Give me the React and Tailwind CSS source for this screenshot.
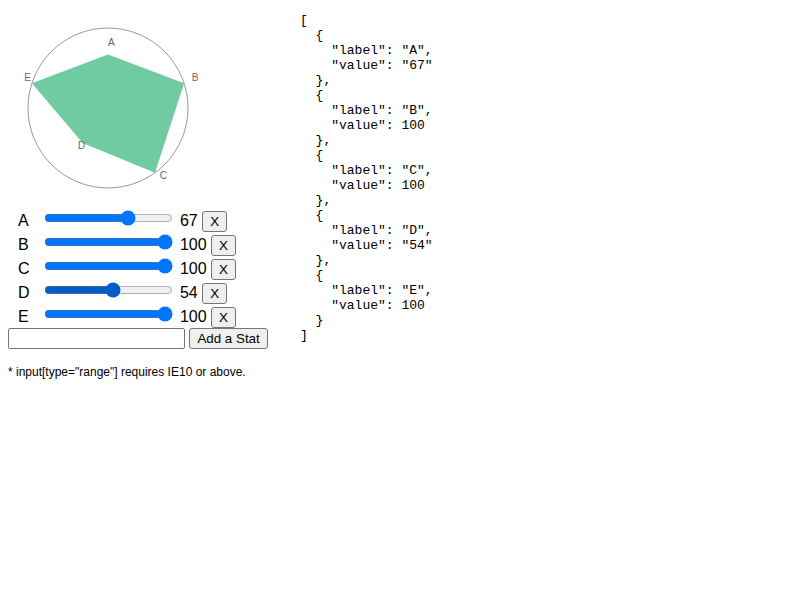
import React, { useState } from 'react';

const valueToPoint = (value, index, total) => {
  const y = -value * 0.8;
  const angle = (Math.PI * 2 / total) * index;
  return {
    x: -y * Math.sin(angle) + 100,
    y: y * Math.cos(angle) + 100,
  };
};

const btn =
  'bg-[#efefef] border border-[#767676] rounded-[3px] px-[7px] py-[2px] text-[13.33px] leading-[normal] text-black';

const App = () => {
  const [stats, setStats] = useState([
    { label: 'A', value: '67' },
    { label: 'B', value: 100 },
    { label: 'C', value: 100 },
    { label: 'D', value: '54' },
    { label: 'E', value: 100 },
  ]);
  const [newLabel, setNewLabel] = useState('');

  const total = stats.length;
  const points = stats
    .map((s, i) => {
      const p = valueToPoint(+s.value, i, total);
      return p.x + ',' + p.y;
    })
    .join(' ');

  const update = (i, v) => setStats(stats.map((s, j) => (j === i ? { ...s, value: v } : s)));
  const remove = (i) => setStats(stats.filter((_, j) => j !== i));
  const add = (e) => {
    e.preventDefault();
    if (!newLabel) return;
    setStats([...stats, { label: newLabel, value: 100 }]);
    setNewLabel('');
  };

  return (
    <div className="flex p-[8px] font-['Liberation_Sans',Arial,sans-serif] text-[16px] leading-[normal] text-black bg-white min-h-[600px]">
      <div className="w-[292px] shrink-0">
        <svg width="200" height="200" className="block">
          <polygon points={points} fill="#42b983" opacity="0.75" />
          <circle cx="100" cy="100" r="80" fill="transparent" stroke="#999" />
          {stats.map((s, i) => {
            const p = valueToPoint(+s.value + 10, i, total);
            return (
              <text key={i} x={p.x} y={p.y} fontSize="10" fill="#666" fontFamily="'Liberation Sans', Arial, sans-serif">
                {s.label}
              </text>
            );
          })}
        </svg>
        {stats.map((s, i) => (
          <div key={i}>
            <label className="inline-block ml-[10px] w-[20px]">{s.label}</label>{' '}
            <input
              type="range"
              min="0"
              max="100"
              value={s.value}
              onChange={(e) => update(i, e.target.value)}
              className={s.label === 'D' ? 'm-[2px] accent-[#005cc8]' : 'm-[2px]'}
            />{' '}
            <span>{s.value}</span>{' '}
            <button className={btn} onClick={() => remove(i)}>X</button>
          </div>
        ))}
        <form onSubmit={add}>
          <input
            value={newLabel}
            onChange={(e) => setNewLabel(e.target.value)}
            className="w-[177px] h-[21px] border border-[#767676] rounded-[2px] px-[3px] text-[13.33px] align-middle"
          />{' '}
          <button type="submit" className={btn + ' align-middle'}>Add a Stat</button>
        </form>
        <p className="text-[12px] mt-[16px] mb-[12px]">* input[type="range"] requires IE10 or above.</p>
      </div>
      <pre className="mt-[5px] font-['Liberation_Mono',monospace] text-[13px] leading-[15px] text-black">
        {JSON.stringify(stats, null, 2)}
      </pre>
    </div>
  );
};

export default App;
